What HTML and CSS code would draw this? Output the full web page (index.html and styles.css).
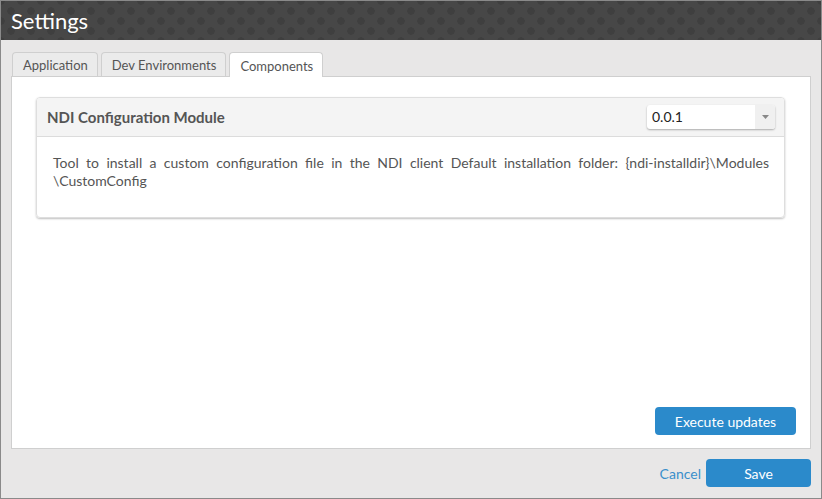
FILE: index.html
```html
<!DOCTYPE html>
<html>
<head>
<meta charset="utf-8">
<link rel="stylesheet" href="styles.css">
</head>
<body>
<div class="window">
  <header class="titlebar"><h1 class="title">Settings</h1></header>
  <main class="content">
    <nav class="tabs">
      <div class="tab">Application</div>
      <div class="tab">Dev Environments</div>
      <div class="tab active">Components</div>
    </nav>
    <section class="panel">
      <div class="card">
        <div class="card-head">
          <span class="card-title">NDI Configuration Module</span>
          <div class="select">
            <span class="select-value">0.0.1</span>
            <span class="select-arrow"><svg width="7" height="4" viewBox="0 0 7 4"><path d="M0 0h7L3.5 4z" fill="#888"/></svg></span>
          </div>
        </div>
        <div class="card-body">Tool to install a custom configuration file in the NDI client Default installation folder: {ndi-installdir}\Modules \CustomConfig</div>
      </div>
      <div class="panel-foot">
        <button class="btn exec">Execute updates</button>
      </div>
    </section>
    <footer class="footer">
      <a class="cancel">Cancel</a>
      <button class="btn save">Save</button>
    </footer>
  </main>
</div>
</body>
</html>
```
FILE: styles.css
```css
* { box-sizing: border-box; }
html, body { margin: 0; padding: 0; }
body {
  font-family: Lato, "Noto Sans", sans-serif;
  width: 822px;
  height: 499px;
  overflow: hidden;
}
.window {
  width: 822px;
  height: 499px;
  border: 1px solid #8a8a8a;
  background: #e8e7e7;
  display: flex;
  flex-direction: column;
}
.titlebar {
  height: 39px;
  background-color: #474747;
  background-image:
    radial-gradient(circle at center, #3f3f3f 3.5px, transparent 4px),
    radial-gradient(circle at center, #3f3f3f 3.5px, transparent 4px);
  background-size: 20px 20px, 20px 20px;
  background-position: 0 0, 10px 10px;
  display: flex;
  align-items: center;
  padding-left: 10px;
}
.title {
  margin: 0;
  color: #fff;
  font-weight: 400;
  font-size: 22px;
  line-height: 1;
  padding-top: 1px;
}
.content {
  flex: 1;
  display: flex;
  flex-direction: column;
  padding: 12px 10px 10px 10px;
}
.tabs {
  display: flex;
  gap: 3px;
  padding-left: 1px;
  height: 24px;
  position: relative;
  z-index: 1;
}
.tab {
  height: 24px;
  padding: 0 9px 0 10px;
  border: 1px solid #cfcfcf;
  border-bottom: none;
  border-radius: 4px 4px 0 0;
  background: #ebebeb;
  color: #555;
  font-size: 13px;
  line-height: 24px;
}
.tab.active {
  background: #fff;
  height: 25px;
  padding: 0 9px 0 10px;
  line-height: 26px;
}
.panel {
  height: 373px;
  background: #fff;
  border: 1px solid #cfcfcf;
  padding: 20px 25px 13px 24px;
  display: flex;
  flex-direction: column;
}
.card {
  border: 1px solid #dedede;
  border-radius: 4px;
  box-shadow: 0 1px 2px rgba(0,0,0,0.25);
  height: 121px;
  overflow: hidden;
}
.card-head {
  height: 39px;
  background: #f4f4f4;
  border-bottom: 1px solid #dcdcdc;
  display: flex;
  align-items: center;
  justify-content: space-between;
  padding: 0 9px 0 10px;
}
.card-title {
  font-size: 15px;
  font-weight: 700;
  color: #555;
}
.select {
  width: 128px;
  height: 24px;
  background: #fff;
  border-radius: 3px;
  box-shadow: 0 1px 2px rgba(0,0,0,0.3);
  display: flex;
  align-items: stretch;
}
.select-value {
  flex: 1;
  font-size: 14px;
  color: #222;
  line-height: 24px;
  padding-left: 5px;
}
.select-arrow {
  width: 20px;
  background: #f0f0f0;
  display: flex;
  align-items: center;
  justify-content: center;
  border-radius: 0 3px 3px 0;
}
.card-body {
  padding: 17px 15px 0 16px;
  font-size: 14px;
  line-height: 18px;
  color: #555;
  text-align: justify;
}
.panel-foot {
  margin-top: auto;
  display: flex;
  justify-content: flex-end;
  margin-right: -11px;
}
.btn {
  font-family: Lato, "Noto Sans", sans-serif;
  border: none;
  background: #2b8acb;
  color: #fff;
  border-radius: 4px;
  font-size: 14px;
  cursor: pointer;
}
.exec {
  width: 141px;
  height: 28px;
  padding: 0;
}
.footer {
  margin-top: 10px;
  display: flex;
  justify-content: flex-end;
  align-items: center;
  gap: 5px;
}
.cancel {
  color: #3a8fcb;
  font-size: 14px;
}
.save {
  width: 105px;
  height: 28px;
}
```
